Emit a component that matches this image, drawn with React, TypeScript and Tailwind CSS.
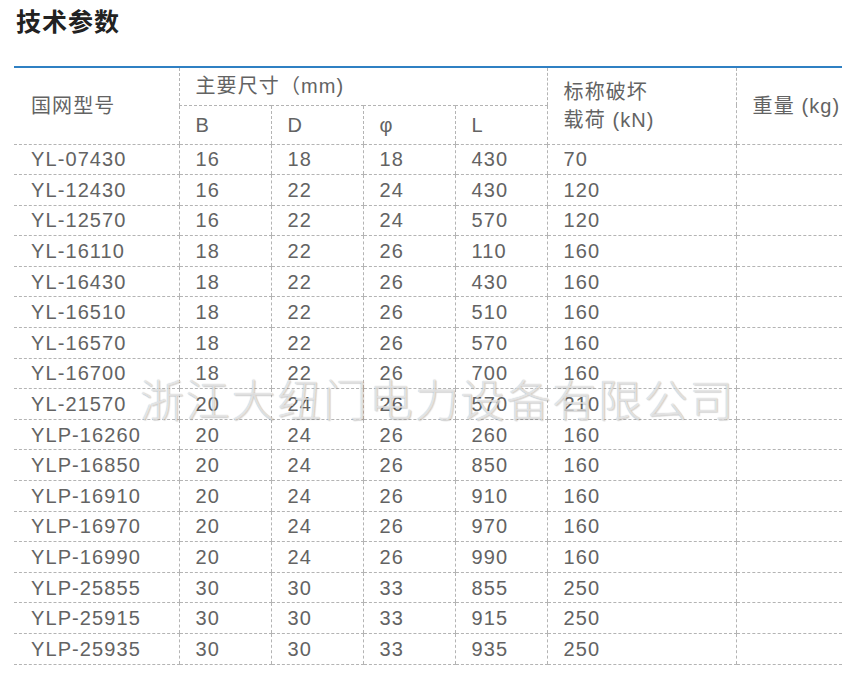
const rows: [string, string, string, string, string, string][] = [
  ["YL-07430", "16", "18", "18", "430", "70"],
  ["YL-12430", "16", "22", "24", "430", "120"],
  ["YL-12570", "16", "22", "24", "570", "120"],
  ["YL-16110", "18", "22", "26", "110", "160"],
  ["YL-16430", "18", "22", "26", "430", "160"],
  ["YL-16510", "18", "22", "26", "510", "160"],
  ["YL-16570", "18", "22", "26", "570", "160"],
  ["YL-16700", "18", "22", "26", "700", "160"],
  ["YL-21570", "20", "24", "26", "570", "210"],
  ["YLP-16260", "20", "24", "26", "260", "160"],
  ["YLP-16850", "20", "24", "26", "850", "160"],
  ["YLP-16910", "20", "24", "26", "910", "160"],
  ["YLP-16970", "20", "24", "26", "970", "160"],
  ["YLP-16990", "20", "24", "26", "990", "160"],
  ["YLP-25855", "30", "30", "33", "855", "250"],
  ["YLP-25915", "30", "30", "33", "915", "250"],
  ["YLP-25935", "30", "30", "33", "935", "250"],
];

const font = "[font-family:'Liberation_Sans','Noto_Sans_CJK_SC',sans-serif]";

export default function App() {
  return (
    <div className={`relative w-[860px] h-[677px] bg-white ${font}`}>
      {/* 标题 */}
      <div className="pl-[16px] pt-[6px] text-[25px] leading-[32px] font-bold text-[#222] tracking-[1px]">
        技术参数
      </div>

      {/* 参数表 */}
      <table className="ml-[14px] mt-[28px] w-[828px] table-fixed border-collapse text-[20px] tracking-[1.1px] text-[#636363]">
        <colgroup>
          <col className="w-[165px]" />
          <col className="w-[92px]" />
          <col className="w-[92px]" />
          <col className="w-[92px]" />
          <col className="w-[92px]" />
          <col className="w-[189px]" />
          <col className="w-[106px]" />
        </colgroup>
        <thead className="border-t-2 border-[#2f80c3]">
          <tr className="h-[38px]">
            <th
              rowSpan={2}
              className="pl-[17px] text-left font-normal align-middle border-b border-dashed border-[#b4b4b4]"
            >
              国网型号
            </th>
            <th
              colSpan={4}
              className="pl-[16px] text-left font-normal border-l border-b border-dashed border-[#b4b4b4]"
            >
              主要尺寸（mm)
            </th>
            <th
              rowSpan={2}
              className="pl-[16px] text-left font-normal leading-[28px] border-l border-b border-dashed border-[#b4b4b4]"
            >
              标称破坏
              <br />
              载荷 (kN)
            </th>
            <th
              rowSpan={2}
              className="pl-[16px] text-left font-normal border-l border-b border-dashed border-[#b4b4b4]"
            >
              重量 (kg)
            </th>
          </tr>
          <tr className="h-[39px]">
            {["B", "D", "φ", "L"].map((h) => (
              <th
                key={h}
                className="pl-[16px] text-left font-normal border-l border-b border-dashed border-[#b4b4b4]"
              >
                {h}
              </th>
            ))}
          </tr>
        </thead>
        <tbody>
          {rows.map((r) => (
            <tr key={r[0]} className="h-[30.6px]">
              <td className="pl-[17px] p-0 leading-none border-b border-dashed border-[#b4b4b4]">{r[0]}</td>
              {r.slice(1).map((v, i) => (
                <td
                  key={i}
                  className="pl-[16px] p-0 leading-none border-l border-b border-dashed border-[#b4b4b4]"
                >
                  {v}
                </td>
              ))}
              <td className="p-0 border-l border-b border-dashed border-[#b4b4b4]" />
            </tr>
          ))}
        </tbody>
      </table>

      {/* 水印 */}
      <div className="pointer-events-none absolute left-[140px] top-[376px] text-[44px] leading-[52px] font-light tracking-[1.8px] text-[rgba(250,250,250,0.7)] [text-shadow:0_0_1px_rgba(0,0,0,0.3),1px_1px_1px_rgba(0,0,0,0.12)] whitespace-nowrap">
        浙江大纽门电力设备有限公司
      </div>
    </div>
  );
}
